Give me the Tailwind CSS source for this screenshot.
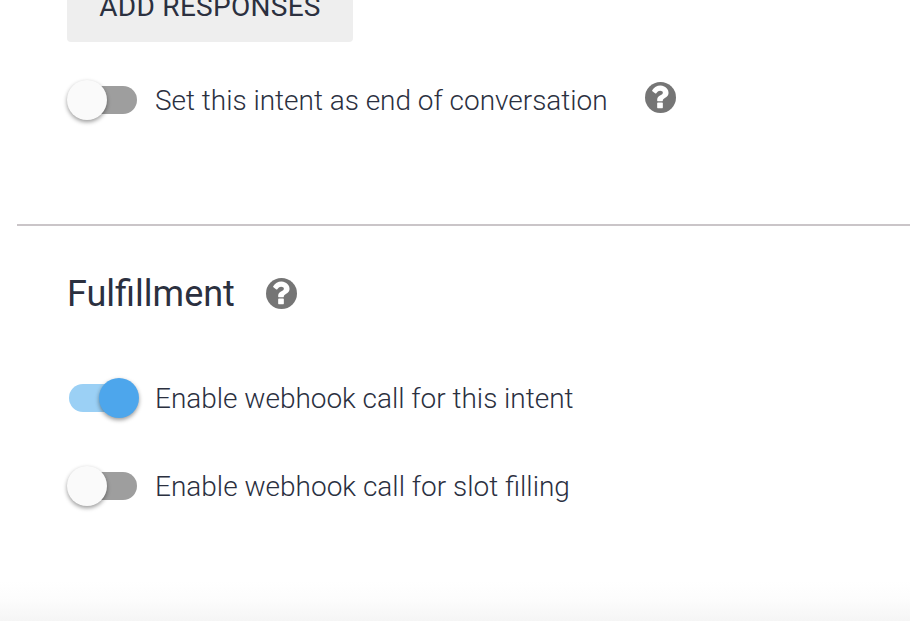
<!DOCTYPE html>
<html lang="en"><head><meta charset="utf-8"><title>Intent settings</title>
<script src="https://cdn.jsdelivr.net/npm/@tailwindcss/browser@4"></script></head>
<body class="bg-white">
<svg class="hidden"><symbol id="help" viewBox="128 128 1536 1536"><circle cx="896" cy="896" r="768"/><path fill="#fff" transform="translate(886 866) scale(1.1) translate(-909 -896)" d="M1024 1376v-192q0-14-9-23t-23-9h-192q-14 0-23 9t-9 23v192q0 14 9 23t23 9h192q14 0 23-9t9-23zm256-672q0-88-55.500-163t-138.500-116-170-41q-243 0-371 213-15 24 8 42l132 100q7 6 19 6 16 0 25-12 53-68 86-92 34-24 86-24 48 0 85.500 26t37.500 59q0 38-20 61t-68 45q-63 28-115.500 86.500t-52.500 125.500v36q0 14 9 23t23 9h192q14 0 23-9t9-23q0-19 21.500-49.500t54.500-49.500q32-18 49-28.500t46-35 44.500-48 28-60.500 12.500-81z"/></symbol></svg>
<main class="w-[910px] h-[621px] overflow-hidden flex flex-col font-['Roboto',sans-serif] text-[#2b303f]">
<div class="h-[42px] shrink-0 pl-[67px] flex items-end"><button class="w-[286px] h-[72px] pt-[2px] bg-[#eee] rounded-[4px] text-[28px] leading-[70px] tracking-[0.28px] whitespace-nowrap">ADD RESPONSES</button></div>
<div class="mt-[34px] h-12 shrink-0 flex items-center pl-[67px]">
<span class="w-[88px] shrink-0 flex items-center"><span class="w-10 h-10 rounded-full bg-[#fafafa] shadow-[0_2px_4px_rgba(0,0,0,.4)] z-10"></span><span class="w-[60px] h-7 -ml-[30px] rounded-full bg-[#9e9e9e]"></span></span>
<span class="w-[490px] pt-[2px] font-light text-[28px] leading-8 tracking-[-0.02px] whitespace-nowrap">Set this intent as end of conversation</span>
<svg class="w-[31px] h-[31px] mb-[6px] fill-[#757575]"><use href="#help"/></svg></div>
<div class="mt-[100px] ml-[17px] h-[2px] shrink-0 bg-[#cac5c8]"></div>
<div class="mt-[43px] h-12 shrink-0 flex items-center pl-[67px]"><h2 class="w-[199px] pt-[2px] text-[36px] leading-10">Fulfillment</h2><svg class="w-[31px] h-[31px] fill-[#757575]"><use href="#help"/></svg></div>
<div class="mt-[57px] h-12 shrink-0 flex items-center pl-[69px]">
<span class="w-[86px] shrink-0 flex items-center"><span class="w-[60px] h-7 rounded-full bg-[#9bd0f5]"></span><span class="w-10 h-10 -ml-[30px] rounded-full bg-[#4da6ec] shadow-[0_2px_4px_rgba(0,0,0,.4)]"></span></span>
<span class="pt-[2px] font-light text-[28px] leading-8 tracking-[-0.02px]">Enable webhook call for this intent</span></div>
<div class="mt-10 h-12 shrink-0 flex items-center pl-[67px]">
<span class="w-[88px] shrink-0 flex items-center"><span class="w-10 h-10 rounded-full bg-[#fafafa] shadow-[0_2px_4px_rgba(0,0,0,.4)] z-10"></span><span class="w-[60px] h-7 -ml-[30px] rounded-full bg-[#9e9e9e]"></span></span>
<span class="pt-[2px] font-light text-[28px] leading-8">Enable webhook call for slot filling</span></div>
<div class="mt-auto h-10 shrink-0 bg-linear-to-b from-white via-[#fcfcfc] to-[#f5f5f5]"></div>
</main></body></html>
